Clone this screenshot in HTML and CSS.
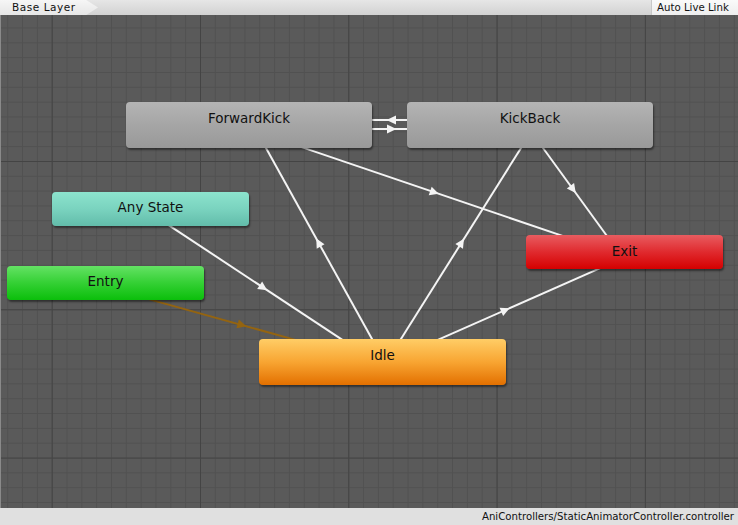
FILE: index.html
```html
<!DOCTYPE html>
<html>
<head>
<meta charset="utf-8">
<link rel="stylesheet" href="styles.css">
</head>
<body>
<div class="window">
  <div class="topbar">
    <div class="crumb">Base Layer</div>
    <div class="live-link">Auto Live Link</div>
  </div>
  <div class="canvas">
    <svg class="edges" viewBox="0 15 738 493" width="738" height="493">
      <g stroke="#f4f4f4" stroke-width="2" fill="none">
        <line x1="262.1" y1="141" x2="375.9" y2="346"/>
        <line x1="525.3" y1="141.2" x2="396.7" y2="345.8"/>
        <line x1="163.3" y1="221.6" x2="347.7" y2="343.4"/>
        <line x1="432.7" y1="342.2" x2="605.3" y2="265.8"/>
        <line x1="296.4" y1="145.4" x2="570.6" y2="238.6"/>
        <line x1="538.3" y1="141.5" x2="611.7" y2="242.5"/>
        <line x1="370" y1="120" x2="410" y2="120"/>
        <line x1="370" y1="129" x2="410" y2="129"/>
      </g>
      <line x1="142.3" y1="297.4" x2="299.7" y2="341.1" stroke="#946410" stroke-width="2"/>
      <g fill="#f4f4f4">
        <polygon points="316.3,238.6 324.5,244.3 316.7,248.7"/>
        <polygon points="463.96,238.77 462.98,248.78 455.36,244.0"/>
        <polygon points="267.17,290.26 257.18,289.05 262.14,281.55"/>
        <polygon points="509.57,308.17 503.16,315.93 499.52,307.71"/>
        <polygon points="438.74,193.81 428.76,195.17 431.66,186.65"/>
        <polygon points="575.74,193.04 566.81,188.41 574.09,183.11"/>
        <polygon points="386.5,120 396,115.5 396,124.5"/>
        <polygon points="396.5,129 387,124.5 387,133.5"/>
      </g>
      <polygon points="246.32,326.34 236.44,328.27 238.86,319.59" fill="#946410"/>
    </svg>
    <div class="node node-gray node-lg" style="left:126px;top:87px">ForwardKick</div>
    <div class="node node-gray node-lg" style="left:407px;top:87px">KickBack</div>
    <div class="node node-teal node-sm" style="left:52px;top:177px">Any State</div>
    <div class="node node-green node-sm" style="left:7px;top:251px">Entry</div>
    <div class="node node-red node-sm node-exit" style="left:526px;top:220px">Exit</div>
    <div class="node node-orange node-lg node-idle" style="left:259px;top:324px">Idle</div>
  </div>
  <div class="bottombar">AniControllers/StaticAnimatorController.controller</div>
</div>
</body>
</html>
```

FILE: styles.css
```css
html, body {
  margin: 0;
  padding: 0;
  background: #595959;
}
.window {
  width: 738px;
  height: 525px;
  display: flex;
  flex-direction: column;
  overflow: hidden;
  font-family: "DejaVu Sans", Verdana, sans-serif;
}
.topbar {
  height: 15px;
  flex: 0 0 15px;
  display: flex;
  justify-content: space-between;
  align-items: stretch;
  background: linear-gradient(#e6e6e6, #d2d2d2);
}
.crumb {
  width: 80px;
  padding-left: 12px;
  padding-right: 6px;
  font-size: 10.5px;
  letter-spacing: 0.55px;
  line-height: 15px;
  color: #111;
  background: linear-gradient(#f6f6f6, #e6e6e6);
  clip-path: polygon(0 0, 88% 0, 100% 50%, 88% 100%, 0 100%);
}
.live-link {
  width: 81px;
  padding-left: 5px;
  font-size: 10.2px;
  line-height: 15px;
  color: #111;
  background: linear-gradient(#fafafa, #eeeeee);
  border-left: 1px solid #c8c8c8;
}
.canvas {
  position: relative;
  flex: 1 1 auto;
  box-shadow: inset 1px 0 0 #8a8a8a;
  background-color: #5a5a5a;
  background-image:
    linear-gradient(to right, #444 1px, transparent 1px),
    linear-gradient(to bottom, #444 1px, transparent 1px),
    linear-gradient(to right, #515151 1px, transparent 1px),
    linear-gradient(to bottom, #515151 1px, transparent 1px);
  background-size:
    148.3px 100%,
    100% 148.3px,
    14.83px 100%,
    100% 14.83px;
  background-position:
    51.7px 0,
    0 146px,
    7.2px 0,
    0 12.5px;
}
.edges {
  position: absolute;
  left: 0;
  top: 0;
}
.node {
  position: absolute;
  box-sizing: border-box;
  border-radius: 4px;
  text-align: center;
  font-size: 13.5px;
  line-height: 16px;
  color: #111;
  box-shadow: 1px 2px 2px rgba(0, 0, 0, 0.45);
}
.node-lg {
  width: 246px;
  height: 46px;
  padding-top: 8px;
}
.node-sm {
  width: 197px;
  height: 34px;
  padding-top: 7px;
}
.node-exit {
  padding-top: 8px;
}
.node-idle {
  width: 247px;
}
.node-gray {
  background: linear-gradient(#b4b4b4, #a4a4a4 55%, #999999);
}
.node-teal {
  background: linear-gradient(#8ce3cd, #7ad3bf 50%, #62bcaa);
}
.node-green {
  background: linear-gradient(#64e264, #34d034 50%, #0bbf0b);
}
.node-orange {
  background: linear-gradient(#ffcd66, #f8a532 50%, #e37000);
}
.node-red {
  background: linear-gradient(#e85c60, #e02a2e 50%, #d50000);
}
.bottombar {
  height: 17px;
  flex: 0 0 17px;
  background: #e0e0e0;
  text-align: right;
  padding-right: 4px;
  font-size: 10.2px;
  line-height: 18px;
  color: #111;
}
```
